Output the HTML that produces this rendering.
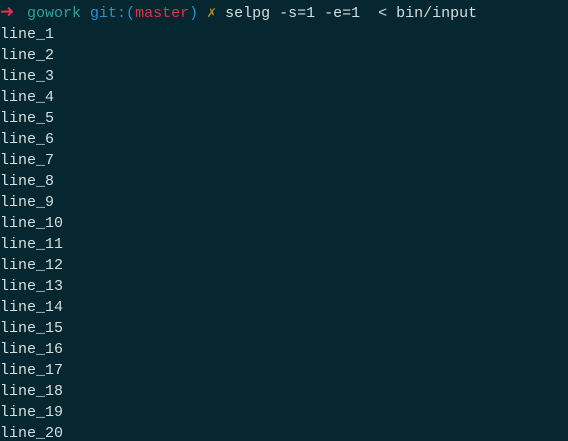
<!DOCTYPE html>
<html><head><style>
html,body{margin:0;padding:0;background:#062630;width:568px;height:441px;overflow:hidden}
pre{margin:0;padding:3px 0 0 0;font-family:"Liberation Mono","DejaVu Sans Mono",monospace;font-size:15px;line-height:21px;color:#d6dfe0;white-space:pre}
.r{color:#e4304d;display:inline-block;width:9px;font-family:"DejaVu Sans",sans-serif;font-size:17px;font-weight:bold;line-height:15px}.t{color:#2aa59a}.b{color:#2a8fd4}.m{color:#e4304d}.y{color:#b58a1e;font-weight:bold}
</style></head><body><pre><span class="r">➜</span>  <span class="t">gowork</span> <span class="b">git:(</span><span class="m">master</span><span class="b">)</span> <span class="y">✗</span> selpg -s=1 -e=1  &lt; bin/input
line_1
line_2
line_3
line_4
line_5
line_6
line_7
line_8
line_9
line_10
line_11
line_12
line_13
line_14
line_15
line_16
line_17
line_18
line_19
line_20</pre></body></html>
